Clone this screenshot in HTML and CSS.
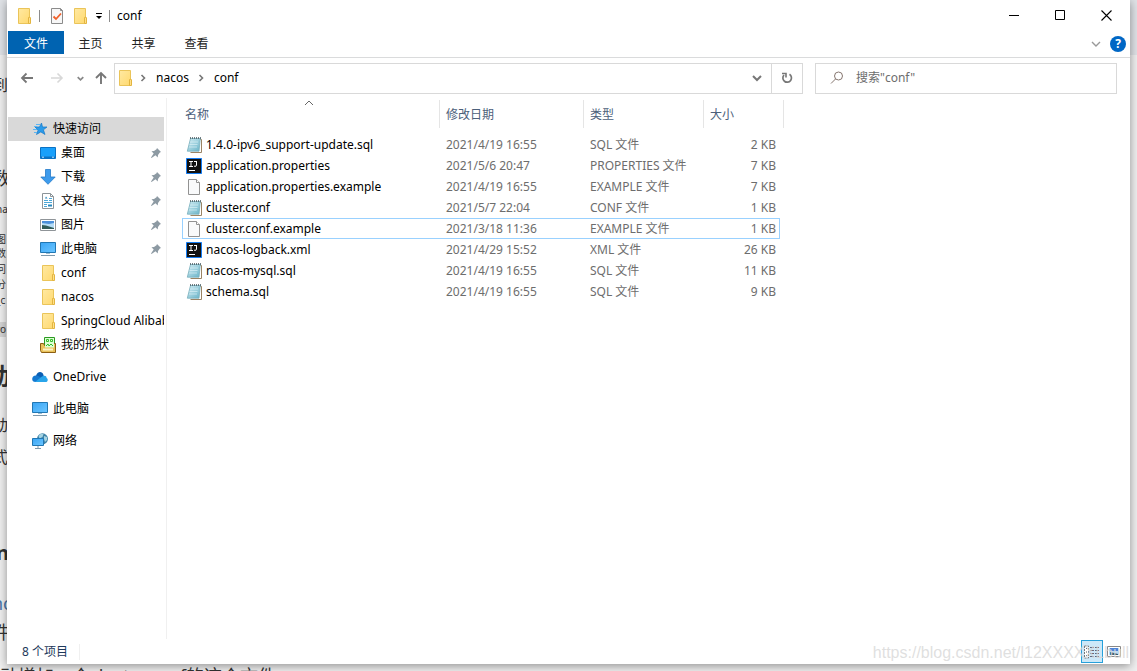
FILE: index.html
```html
<!DOCTYPE html>
<html lang="zh-CN">
<head>
<meta charset="utf-8">
<title>conf</title>
<link rel="stylesheet" href="styles.css">
</head>
<body>
<svg width="0" height="0" class="defs" aria-hidden="true">
  <defs>
    <linearGradient id="gFolder" x1="0" y1="0" x2="1" y2="1"><stop offset="0" stop-color="#ffe9a2"/><stop offset="1" stop-color="#ffd96f"/></linearGradient>
    <linearGradient id="gBlue" x1="0" y1="0" x2="1" y2="1"><stop offset="0" stop-color="#3aa5f5"/><stop offset="1" stop-color="#6cc6ff"/></linearGradient>
    <linearGradient id="gNote" x1="0" y1="0" x2="1" y2="1"><stop offset="0" stop-color="#d2ecf3"/><stop offset="1" stop-color="#68b4c8"/></linearGradient>
    <symbol id="folder" viewBox="0 0 16 16"><path d="M2.500.500h11v15h-11z" fill="url(#gFolder)" stroke="#eac459"/><path d="M12.500 9.500q2-1 2 .5v5.500h-2z" fill="#ffe08a" stroke="#e3b540"/></symbol>
    <symbol id="star" viewBox="0 0 16 16"><path d="M9.500 2l1 4h4.500l-3.600 2.800 1.600 4.700-4.200-2.600L4.500 13.500l1.600-4.400L3 6h4.500z" fill="#2b9bea" stroke="#1679c7" stroke-width=".7"/><path d="M4 3.500h4M2 5.500h3M1 8.500h4M2 11.500h3" stroke="#5cb6f2"/></symbol>
    <symbol id="desktop" viewBox="0 0 16 16"><path d="M.5 2.500h15v11H.500z" fill="#19a0fb" stroke="#0b72c4"/><path d="M1 11.500h14v1.500H1z" fill="#0b72c4"/><path d="M2 12.200h2m8 0h2" stroke="#bfe4ff"/></symbol>
    <symbol id="down" viewBox="0 0 16 16"><path d="M5.500.500h5V8h4.700L8 15.300.800 8h4.700z" fill="#3d9bec" stroke="#237ac9" stroke-width=".8"/></symbol>
    <symbol id="doc" viewBox="0 0 16 16"><path d="M2.500.500h8l3 3v12h-11z" fill="#fff" stroke="#8c9499"/><path d="M10.500.500v3h3" fill="none" stroke="#8c9499"/><path d="M4 7.500h4M4 9.500h8M4 13.500h3M9 7.500h3M9 5.500h3" stroke="#4ba7d8"/><path d="M5 5.500l1-2 1.500 2zM8 11.500h4v2H8z" fill="#2787bd"/><path d="M4 11.500h3" stroke="#4ba7d8"/></symbol>
    <symbol id="picture" viewBox="0 0 16 16"><path d="M.5 2.500h15v11H.500z" fill="#fff" stroke="#8f9498"/><path d="M2 4h12v8H2z" fill="#b5dcf6"/><path d="M2 4h12v2L9 7 2 6z" fill="#4c8fd9"/><path d="M2 8l4 .5 8 2.500v1H2z" fill="#315c58"/></symbol>
    <symbol id="pc" viewBox="0 0 16 16"><path d="M.5 1.500h15v10H.500z" fill="url(#gBlue)" stroke="#2177b3"/><path d="M6 12h4v1H6z" fill="#9bbbd0"/><path d="M1 14.500h14" stroke="#7f99ab"/></symbol>
    <symbol id="shapes" viewBox="0 0 16 16"><path d="M4.500.500h10v11h-10z" fill="#dcffd4" stroke="#2c9a22"/><path d="M6.500 2.500h2v2h-2zM10.500 2.500h2v2h-2z" fill="none" stroke="#36bd2a"/><path d="M.5 6.500h3l1 2h8l1-2h2v9h-14l-1-2z" fill="#e9c25a" stroke="#8d5f13"/><path d="M5 5.500h9v5H5z" fill="#dcffd4"/><path d="M6 9l2-2 1 2 2-2 2 2" stroke="#36bd2a" fill="none"/><path d="M3 12.500h10" stroke="#fff3c4" stroke-width="2"/></symbol>
    <symbol id="cloud" viewBox="0 0 16 16"><path d="M4 7C5 2.500 10 1.500 11.500 6l1 5z" fill="#0a5fb4"/><path d="M3.500 13C-1 13-1 6.500 4 6.500c2 0 5 2 8 4.500z" fill="#1478d0"/><path d="M3 13l7-5.500c3-2 5 0 4.500 1.500 2 1 1.500 4-1 4z" fill="#29a5ea"/></symbol>
    <symbol id="network" viewBox="0 0 16 16"><circle cx="10.500" cy="5.800" r="5.500" fill="#3f84a8"/><path d="M6.500 3q2-3 5-2l-1 3-3 1.500zM12 3l3 1v3l-2 2-1-3z" fill="#a5d3e2"/><path d="M.5 5.500h11v7H.500z" fill="url(#gBlue)" stroke="#2177b3"/><path d="M3 15.500h6M6 13v2" stroke="#7f99ab"/></symbol>
    <symbol id="pin" viewBox="0 0 12 12"><path d="M7 1l4 4-1.200.600L8 8l-.3 2.500-2.200-2.200L1.500 11l-.500-.500L3.700 6.500 1.500 4.300 4 4l2.500-1.800z" fill="#8d9aa3"/></symbol>
    <symbol id="note" viewBox="0 0 16 16"><path d="M13.500 2.500h2v13h-11" fill="#fff" stroke="#9b8464"/><path d="M4.500 1.500h9.800L13 14.200H1.300z" fill="url(#gNote)" stroke="#79aebc" stroke-width=".8"/><path d="M4 1h11" stroke="#45565c" stroke-width="1.500" stroke-dasharray="1 1"/><path d="M4 5h8M3.500 7.500h8M3 10h8" stroke="#e2f5fa" stroke-width=".6"/></symbol>
    <symbol id="idea" viewBox="0 0 16 16"><path d="M.5.500h15v15H.500z" fill="#111" stroke="#147df5"/><path d="M3 3.500h4M5 3v5M3 8.500h4M8 3.500h3M10.500 3v4q0 2-2.500 1.200M3 12.500h6" fill="none" stroke="#fff"/></symbol>
    <symbol id="file" viewBox="0 0 16 16"><path d="M2.500.500h8l3 3v12h-11z" fill="#f9fafb" stroke="#929292"/><path d="M10.500.500v3h3" fill="#fff" stroke="#929292"/></symbol>
    <symbol id="chev" viewBox="0 0 10 10"><path d="M1 3l4 4 4-4" fill="none" stroke="currentColor" stroke-width="1.400"/></symbol>
  </defs>
</svg>

<div class="backdrop" aria-hidden="true">
  <span class="scrap s16" style="top:73px">到</span>
  <span class="scrap s18" style="top:165px">数</span>
  <span class="scrap s10" style="top:202px">na</span>
  <span class="scrap s10" style="top:232px">图</span>
  <span class="scrap s10" style="top:246px">数</span>
  <span class="scrap s10" style="top:262px">问</span>
  <span class="scrap s10" style="top:277px">分</span>
  <span class="scrap s10" style="top:293px">_c</span>
  <span class="scrap s10 mark" style="top:322px">ro</span>
  <span class="scrap s24" style="top:358px">动</span>
  <span class="scrap s16" style="top:413px">动</span>
  <span class="scrap s16" style="top:445px">式</span>
  <span class="scrap s20" style="top:538px">n</span>
  <span class="scrap s18 link" style="top:590px">nc</span>
  <span class="scrap s18" style="top:619px">件</span>
  <span class="footline">动增加一个cluster.conf的这个文件</span>
</div>

<main class="window">
  <header class="titlebar">
    <svg class="i16"><use href="#folder"/></svg>
    <span class="bar"></span>
    <button class="plain prop" aria-label="属性"><svg class="i16" viewBox="0 0 16 16"><path d="M2.500.500h9l2 2v13h-11z" fill="#f7f7f7" stroke="#8b8b8b"/><path d="M11.500.500v2h2" fill="none" stroke="#8b8b8b"/><path d="M4.500 8.500l2.500 2.500 5-5.500" fill="none" stroke="#f0602a" stroke-width="1.800"/></svg></button>
    <button class="plain" aria-label="新建文件夹"><svg class="i16"><use href="#folder"/></svg></button>
    <button class="plain qat" aria-label="自定义快速访问工具栏"><svg width="8" height="8" viewBox="0 0 8 8"><path d="M1 1.500h6" stroke="#000"/><path d="M1 4h6L4 7z"/></svg></button>
    <span class="bar"></span>
    <h1 class="title">conf</h1>
    <div class="caption">
      <button class="plain cap" aria-label="最小化"><svg width="11" height="11" viewBox="0 0 11 11"><path d="M0 5.500h10" stroke="#000"/></svg></button>
      <button class="plain cap" aria-label="最大化"><svg width="11" height="11" viewBox="0 0 11 11"><path d="M.5.500h9v9h-9z" fill="none" stroke="#000"/></svg></button>
      <button class="plain cap" aria-label="关闭"><svg width="11" height="11" viewBox="0 0 11 11"><path d="M.5.500l10 10M10.500.500l-10 10" stroke="#000" stroke-width="1.100"/></svg></button>
    </div>
  </header>

  <nav class="ribbon">
    <button class="tab active">文件</button>
    <button class="tab">主页</button>
    <button class="tab">共享</button>
    <button class="tab">查看</button>
    <div class="ribbon-end">
      <button class="plain faint" aria-label="展开功能区"><svg width="10" height="10"><use href="#chev"/></svg></button>
      <button class="help" aria-label="帮助">?</button>
    </div>
  </nav>

  <div class="navrow">
    <div class="arrows">
      <button class="plain" aria-label="后退"><svg width="14" height="14" viewBox="0 0 14 14"><path d="M13 7H2M6.500 2.500L2 7l4.500 4.500" fill="none" stroke="#777" stroke-width="1.800"/></svg></button>
      <button class="plain fwd" aria-label="前进"><svg width="14" height="14" viewBox="0 0 14 14"><path d="M1 7h11M7.500 2.500L12 7l-4.500 4.500" fill="none" stroke="#d8d8d8" stroke-width="1.600"/></svg></button>
      <button class="plain hist" aria-label="最近位置"><svg width="7" height="7" viewBox="0 0 10 10"><path d="M1 3l4 4 4-4" fill="none" stroke="#888" stroke-width="2.400"/></svg></button>
      <button class="plain up" aria-label="上移"><svg width="14" height="14" viewBox="0 0 14 14"><path d="M7 13V2M2 7l5-5 5 5" fill="none" stroke="#777" stroke-width="1.900"/></svg></button>
    </div>
    <div class="address">
      <svg class="i16"><use href="#folder"/></svg>
      <svg class="sep" width="6" height="8" viewBox="0 0 6 8"><path d="M1.500 1l3 3-3 3" fill="none" stroke="#777" stroke-width="1.600"/></svg>
      <button class="crumb">nacos</button>
      <svg class="sep" width="6" height="8" viewBox="0 0 6 8"><path d="M1.500 1l3 3-3 3" fill="none" stroke="#777" stroke-width="1.600"/></svg>
      <button class="crumb">conf</button>
      <button class="plain drop" aria-label="以前的位置"><svg width="10" height="10" viewBox="0 0 10 10"><path d="M1 3l4 4 4-4" fill="none" stroke="#777" stroke-width="2"/></svg></button>
      <button class="refresh" aria-label="刷新"><svg width="12" height="12" viewBox="0 0 12 12"><path d="M8.500 2.300A4.300 4.300 0 1 1 3 3" fill="none" stroke="#777" stroke-width="1.700"/><path d="M1 1.500h4v4" fill="none" stroke="#777" stroke-width="1.600"/></svg></button>
    </div>
    <label class="search">
      <svg width="14" height="14" viewBox="0 0 14 14"><circle cx="8.500" cy="5" r="4" fill="none" stroke="#86766f"/><path d="M5.500 8L1 12.500" stroke="#86766f"/></svg>
      <input type="text" placeholder="搜索&quot;conf&quot;" aria-label="搜索">
    </label>
  </div>

  <div class="content">
    <aside class="sidebar">
      <a href="#" class="item root selected"><svg class="i16"><use href="#star"/></svg><span>快速访问</span></a>
      <a href="#" class="item"><svg class="i16"><use href="#desktop"/></svg><span>桌面</span><svg class="pin"><use href="#pin"/></svg></a>
      <a href="#" class="item"><svg class="i16"><use href="#down"/></svg><span>下载</span><svg class="pin"><use href="#pin"/></svg></a>
      <a href="#" class="item"><svg class="i16"><use href="#doc"/></svg><span>文档</span><svg class="pin"><use href="#pin"/></svg></a>
      <a href="#" class="item"><svg class="i16"><use href="#picture"/></svg><span>图片</span><svg class="pin"><use href="#pin"/></svg></a>
      <a href="#" class="item"><svg class="i16"><use href="#pc"/></svg><span>此电脑</span><svg class="pin"><use href="#pin"/></svg></a>
      <a href="#" class="item"><svg class="i16"><use href="#folder"/></svg><span>conf</span></a>
      <a href="#" class="item"><svg class="i16"><use href="#folder"/></svg><span>nacos</span></a>
      <a href="#" class="item"><svg class="i16"><use href="#folder"/></svg><span>SpringCloud Alibaba</span></a>
      <a href="#" class="item"><svg class="i16"><use href="#shapes"/></svg><span>我的形状</span></a>
      <a href="#" class="item root gap"><svg class="i16"><use href="#cloud"/></svg><span>OneDrive</span></a>
      <a href="#" class="item root gap"><svg class="i16"><use href="#pc"/></svg><span>此电脑</span></a>
      <a href="#" class="item root gap"><svg class="i16"><use href="#network"/></svg><span>网络</span></a>
    </aside>
    <section class="files">
      <table>
        <colgroup><col class="c1"><col class="c2"><col class="c3"><col class="c4"><col class="c5"></colgroup>
        <thead><tr><th>名称<svg class="sort" width="10" height="6" viewBox="0 0 10 6"><path d="M1 5l4-4 4 4" fill="none" stroke="#666"/></svg></th><th>修改日期</th><th>类型</th><th colspan="2">大小</th></tr></thead>
        <tbody>
          <tr><td><div class="name"><svg class="i16"><use href="#note"/></svg>1.4.0-ipv6_support-update.sql</div></td><td>2021/4/19 16:55</td><td>SQL 文件</td><td>2 KB</td></tr>
          <tr><td><div class="name"><svg class="i16"><use href="#idea"/></svg>application.properties</div></td><td>2021/5/6 20:47</td><td>PROPERTIES 文件</td><td>7 KB</td></tr>
          <tr><td><div class="name"><svg class="i16"><use href="#file"/></svg>application.properties.example</div></td><td>2021/4/19 16:55</td><td>EXAMPLE 文件</td><td>7 KB</td></tr>
          <tr><td><div class="name"><svg class="i16"><use href="#note"/></svg>cluster.conf</div></td><td>2021/5/7 22:04</td><td>CONF 文件</td><td>1 KB</td></tr>
          <tr class="focus"><td><div class="name"><svg class="i16"><use href="#file"/></svg>cluster.conf.example</div></td><td>2021/3/18 11:36</td><td>EXAMPLE 文件</td><td>1 KB</td></tr>
          <tr><td><div class="name"><svg class="i16"><use href="#idea"/></svg>nacos-logback.xml</div></td><td>2021/4/29 15:52</td><td>XML 文件</td><td>26 KB</td></tr>
          <tr><td><div class="name"><svg class="i16"><use href="#note"/></svg>nacos-mysql.sql</div></td><td>2021/4/19 16:55</td><td>SQL 文件</td><td>11 KB</td></tr>
          <tr><td><div class="name"><svg class="i16"><use href="#note"/></svg>schema.sql</div></td><td>2021/4/19 16:55</td><td>SQL 文件</td><td>9 KB</td></tr>
        </tbody>
      </table>
    </section>
  </div>

  <footer class="status">
    <span class="count">8 个项目</span>
    <div class="views">
      <button class="view on" aria-label="详细信息"><svg width="16" height="14" viewBox="0 0 16 14"><path d="M.5 1h4v12h-4z" fill="#fff" stroke="#777" stroke-dasharray="2 1"/><path d="M2 3.500h1M2 7h1M2 10.500h1" stroke="#555"/><path d="M6 2.500h4M11 2.500h4M6 5.500h4M11 5.500h4M6 8.500h4M11 8.500h4M6 11.500h4M11 11.500h4" stroke="#667"/></svg></button>
      <button class="view" aria-label="大缩略图"><svg width="14" height="12" viewBox="0 0 14 12"><path d="M.5.500h13v10H.500z" fill="#fff" stroke="#888"/><path d="M2 2h10v7H2z" fill="#b9dcf5"/><path d="M3 2h8v3H3z" fill="#4c84d9"/><path d="M3 6l8 2v1H3z" fill="#355a70"/></svg></button>
    </div>
  </footer>
</main>
<div class="watermark">https://blog.csdn.net/l12XXXXXLbull</div>
</body>
</html>
```

FILE: styles.css
```css
* { box-sizing: border-box; }
body {
  margin: 0;
  height: 100vh;
  overflow: hidden;
  position: relative;
  padding: 0 7px 7px;
  background: linear-gradient(#dfe2e6 55px, #efefef 55px);
  font: 12px/16px "Noto Sans", "Noto Sans CJK SC", sans-serif;
  color: #000;
}
button, input { font: inherit; color: inherit; }
button { border: 0; background: none; padding: 0; }
svg { display: block; flex: none; }
.defs { position: absolute; }
.i16 { width: 16px; height: 16px; }
.plain { display: flex; align-items: center; justify-content: center; }

.backdrop { position: absolute; inset: 0; overflow: hidden; color: #333; }
.scrap { position: absolute; left: -8px; line-height: 1.5; white-space: nowrap; }
.s10 { font-size: 10px; left: -4px; }
.s16 { font-size: 16px; }
.s18 { font-size: 18px; }
.s20 { font-size: 20px; font-weight: bold; left: -4px; }
.s24 { font-size: 24px; font-weight: bold; left: -14px; }
.mark { background: #d4d4d4; }
.link { color: #4a76a8; }
.footline { position: absolute; left: 0; top: 664px; font-size: 18px; line-height: 24px; white-space: nowrap; }

.window {
  position: relative;
  height: 100%;
  display: flex;
  flex-direction: column;
  background: #fff;
  box-shadow: 0 2px 9px rgba(0, 0, 0, .4);
}
.titlebar { display: flex; align-items: center; height: 31px; padding-left: 9px; gap: 7px; }
.bar { width: 1px; height: 12px; background: #8c8c8c; }
.prop { margin-left: 2px; }
.qat { width: 7px; }
.title { margin: 0; font-size: 12px; font-weight: normal; }
.caption { margin-left: auto; display: flex; padding-right: 1px; }
.cap { width: 46px; height: 30px; }

.ribbon { display: flex; height: 27px; padding: 0 4px 3px 1px; border-bottom: 1px solid #dadbdc; }
.tab { width: 53px; padding-top: 2px; color: #222; }
.tab.active { width: 56px; background: #0063b1; color: #fff; }
.ribbon-end { margin-left: auto; display: flex; align-items: center; gap: 9px; padding-top: 3px; }
.faint { color: #999; }
.help { width: 16px; height: 16px; border-radius: 50%; background: #0067c5; color: #fff; font-weight: bold; line-height: 16px; }

.navrow { display: grid; grid-template-columns: 94px minmax(0, 689fr) minmax(0, 314fr); height: 40px; align-items: center; padding: 0 13px; }
.arrows { display: flex; align-items: center; }
.fwd { margin-left: 16px; }
.hist { margin-left: 13px; }
.up { margin-left: 10px; }
.address { display: flex; align-items: center; height: 31px; border: 1px solid #d9d9d9; padding-left: 2px; }
.sep { margin: 0 10px 0 7px; }
.crumb + .sep { margin-left: 9px; }
.drop { margin-left: auto; width: 29px; }
.refresh { width: 31px; height: 29px; border-left: 1px solid #d9d9d9; display: flex; align-items: center; justify-content: center; }
.search { margin-left: 12px; display: flex; align-items: center; gap: 12px; height: 31px; border: 1px solid #d9d9d9; padding: 0 14px; }
.search input { border: 0; outline: 0; padding: 0; flex: 1; min-width: 0; background: none; }
.search input::placeholder { color: #6d6d6d; opacity: 1; }

.content { flex: 1; display: flex; min-height: 0; }
.sidebar { width: 160px; padding: 19px 2px 0 1px; border-right: 1px solid #f0f0f0; }
.item { display: flex; align-items: center; height: 24px; padding-left: 32px; gap: 5px; color: #000; text-decoration: none; overflow: hidden; white-space: nowrap; }
.item.root { padding-left: 24px; }
.item.gap { margin-top: 8px; }
.selected { background: #d9d9d9; }
.pin { width: 12px; height: 12px; margin-left: auto; margin-right: 2px; }

.files { flex: 1; padding: 2px 0 0 15px; }
table { border-collapse: separate; border-spacing: 0; table-layout: fixed; width: 602px; }
.c1 { width: 258px; } .c2 { width: 144px; } .c3 { width: 120px; } .c4 { width: 76px; } .c5 { width: 4px; }
th { position: relative; height: 28px; padding: 2px 0 0 6px; text-align: left; font-weight: normal; color: #4c607a; border-right: 1px solid #e5e5e5; }
th:first-child { padding-left: 3px; }
.sort { position: absolute; left: 122px; top: 0; }
td { height: 21px; padding: 0 0 0 6px; color: #6d6d6d; white-space: nowrap; }
td:first-child { padding-left: 4px; color: #000; }
td:last-child { text-align: right; padding: 0 4px 0 0; }
tbody::before { content: ""; display: table-row; height: 6px; }
.name { display: flex; align-items: center; gap: 4px; }
.focus td { border: solid #99d1ff; border-width: 1px 0; }
.focus td:first-child { border-left-width: 1px; padding-left: 3px; }
.focus td:last-child { border-right-width: 1px; padding-right: 3px; }

.status { display: flex; height: 25px; align-items: center; padding: 0 5px 0 15px; color: #1e395b; }
.count { padding-right: 11px; border-right: 1px solid #f0f0f0; }
.views { margin-left: auto; display: flex; }
.view { width: 22px; height: 23px; display: flex; align-items: center; justify-content: center; }
.view.on { background: #cce8f8; border: 1px solid #26a0da; }
.watermark { position: absolute; right: 8px; bottom: 8px; font: 16px/20px "Liberation Sans", Arial, sans-serif; color: rgba(215, 215, 215, .8); pointer-events: none; }
```
